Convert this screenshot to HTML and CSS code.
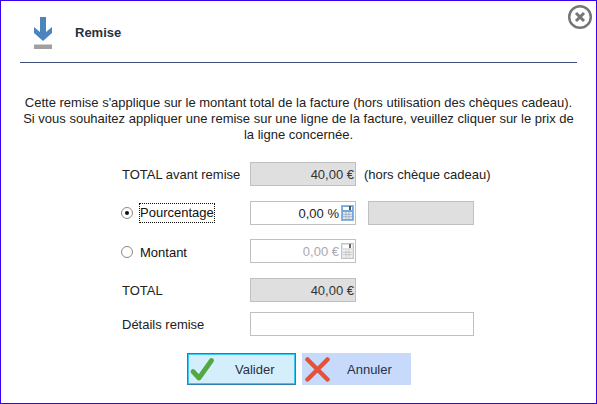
FILE: index.html
```html
<!DOCTYPE html>
<html lang="fr">
<head>
<meta charset="utf-8">
<title>Remise</title>
<link rel="stylesheet" href="styles.css">
</head>
<body>
<div class="window">
  <svg class="close" width="26" height="26" viewBox="0 0 26 26" aria-label="Fermer">
    <circle cx="13" cy="13" r="10.800" fill="#fff" stroke="#777" stroke-width="2.500"/>
    <path d="M9 9l8 8M17 9l-8 8" stroke="#777" stroke-width="3" fill="none"/>
  </svg>
  <header class="head">
    <svg class="head-icon" width="20" height="33" viewBox="0 0 20 33">
      <path d="M7 1h6v15l6-5v6l-9 8-9-8v-6l6 5z" fill="#4a86bd"/>
      <rect x="1" y="28" width="18" height="1" fill="#d0d0d0"/>
      <rect x="1" y="29" width="18" height="4" fill="#a0a0a0"/>
    </svg>
    <h1 class="title">Remise</h1>
  </header>
  <p class="intro">Cette remise s'applique sur le montant total de la facture (hors utilisation des chèques cadeau).<br>Si vous souhaitez appliquer une remise sur une ligne de la facture, veuillez cliquer sur le prix de<br>la ligne concernée.</p>
  <div class="form">
    <div class="row row-1">
      <span class="label">TOTAL avant remise</span>
      <div class="field readonly">40,00 €</div>
      <span class="note">(hors chèque cadeau)</span>
    </div>
    <div class="row row-2">
      <label class="label radio-label"><span class="radio checked"></span><span class="focus">Pourcentage</span></label>
      <div class="field with-calc">0,00 %<svg class="calc" width="13" height="16" viewBox="0 0 13 16"><rect x=".5" y=".5" width="12" height="15" fill="#6fa8dc" stroke="#8db6da"/><rect x="2" y="2" width="9" height="3" fill="#fff"/><rect x="8" y="1" width="2" height="4" fill="#456"/><path d="M2 7h9v7H2z" fill="#e6ebf0"/><path d="M2 9.300h9M2 11.700h9M5 7v7M8 7v7" stroke="#9ab" stroke-width=".8"/></svg></div>
      <div class="field readonly side"></div>
    </div>
    <div class="row row-3">
      <label class="label radio-label"><span class="radio"></span><span class="plain">Montant</span></label>
      <div class="field with-calc disabled">0,00 €<svg class="calc" width="13" height="16" viewBox="0 0 13 16"><rect x=".5" y=".5" width="12" height="15" fill="#e2e2e2" stroke="#c4c4c4"/><rect x="2" y="2" width="9" height="3" fill="#fff"/><rect x="8" y="1" width="2" height="4" fill="#666"/><path d="M2 7h9v7H2z" fill="#f4f4f4"/><path d="M2 9.300h9M2 11.700h9M5 7v7M8 7v7" stroke="#bbb" stroke-width=".8"/></svg></div>
    </div>
    <div class="row row-4">
      <span class="label">TOTAL</span>
      <div class="field readonly">40,00 €</div>
    </div>
    <div class="row row-5">
      <span class="label">Détails remise</span>
      <div class="field wide"></div>
    </div>
  </div>
  <div class="actions">
    <button class="btn btn-ok" type="button">
      <svg width="28" height="26" viewBox="0 0 28 26"><path d="M4 15.500l6 6.500L22.500 4.500" fill="none" stroke="#53a844" stroke-width="4.800" stroke-linecap="round" stroke-linejoin="round"/></svg>
      <span>Valider</span>
    </button>
    <button class="btn btn-cancel" type="button">
      <svg width="26" height="26" viewBox="0 0 26 26"><path d="M2.500 3.500l20 20M22.500 3.500l-20 20" fill="none" stroke="#e2533c" stroke-width="4.500" stroke-linecap="round"/></svg>
      <span>Annuler</span>
    </button>
  </div>
</div>
</body>
</html>
```
FILE: styles.css
```css
* { box-sizing: border-box; }
html, body { margin: 0; padding: 0; background: #fff; }
body {
  font-family: "Liberation Sans", Arial, sans-serif;
  font-size: 13px;
  color: #222;
}
.window {
  position: relative;
  width: 597px;
  height: 404px;
  border: 1px solid #3a00f0;
  overflow: hidden;
}
.close { position: absolute; top: 3px; right: 3px; }
.head {
  display: flex;
  align-items: center;
  height: 62px;
  margin: 0 19px 0 19px;
  padding: 1px 0 0 13px;
  border-bottom: 1px solid #3f4f7d;
}
.title {
  margin: 0 0 0 22px;
  font-size: 13px;
  font-weight: bold;
  color: #2a3040;
}
.intro {
  margin: 32px 0 0;
  text-align: center;
  font-size: 13px;
  line-height: 16px;
  color: #222;
  height: 48px;
}
.form {
  display: flex;
  flex-direction: column;
  margin-top: 19px;
  padding-left: 121px;
}
.row { display: flex; align-items: center; height: 24px; }
.row-2 { margin-top: 15px; }
.row-3 { margin-top: 14px; }
.row-4 { margin-top: 15px; }
.row-5 { margin-top: 10px; }
.row-2 .label { padding-bottom: 1px; }
.row-3 .label { padding-top: 2px; }
.label { width: 128px; flex: none; }
.radio-label { display: flex; align-items: center; }
.radio {
  width: 12px;
  height: 12px;
  border: 1px solid #888;
  border-radius: 50%;
  background: #fff;
  margin-right: 7px;
  margin-left: -1px;
  flex: none;
  position: relative;
}
.radio.checked::after {
  content: "";
  position: absolute;
  left: 3px;
  top: 3px;
  width: 4px;
  height: 4px;
  border-radius: 50%;
  background: #111;
}
.focus { outline: 1px dotted #111; line-height: 18px; color: #111; }
.plain { color: #111; }
.field {
  width: 106px;
  height: 24px;
  border: 1px solid #c0c0c0;
  background: #fff;
  display: flex;
  align-items: center;
  justify-content: flex-end;
  padding-right: 1px;
  flex: none;
  color: #222;
}
.readonly { background: #dfdfdf; color: #333; }
.with-calc { gap: 2px; }
.disabled { color: #aaa; }
.note { margin-left: 8px; }
.side { margin-left: 12px; }
.wide { width: 224px; }
.actions {
  display: flex;
  gap: 6px;
  margin-top: 17px;
  padding-left: 186px;
}
.btn {
  width: 109px;
  height: 32px;
  display: flex;
  align-items: center;
  padding: 0;
  font: inherit;
  color: #2b3040;
  cursor: pointer;
}
.btn-ok {
  background: #d4eefb;
  border: 1px solid #2e7fb0;
  outline: 1px solid #3cc8f4;
  outline-offset: -2px;
}
.btn-ok svg { margin-left: 1px; flex: none; }
.btn-ok span { margin-left: 18px; }
.btn-cancel { background: #c8dafc; border: 0; }
.btn-cancel svg { margin-left: 3px; flex: none; }
.btn-cancel span { margin-left: 16px; }
```
